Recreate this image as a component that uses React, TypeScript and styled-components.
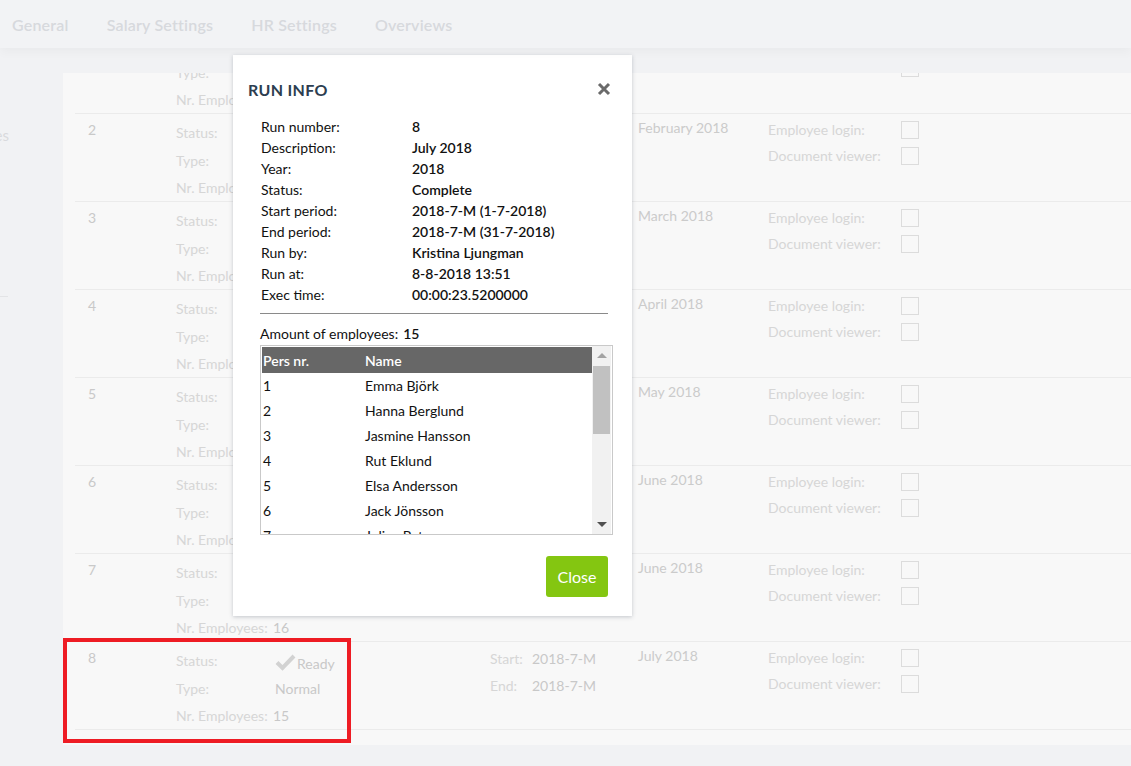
import React from 'react';
import styled, { createGlobalStyle } from 'styled-components';

const GlobalStyle = createGlobalStyle`
  html, body {
    margin: 0;
    padding: 0;
    background: #f1f2f4;
    font-family: "Source Sans Pro", "Lato", "Noto Sans", sans-serif;
    font-size: 14px;
  }
  #root { min-height: 766px; }
`;

// ---------- page shell ----------
const Page = styled.div`
  position: relative;
  width: 1131px;
  height: 766px;
  overflow: hidden;
  background: #f1f2f4;
`;

const TopBar = styled.div`
  height: 48px;
  display: flex;
  align-items: center;
  gap: 38px;
  padding-left: 12px;
  background: #f2f3f5;
  box-shadow: 0 4px 10px rgba(0, 0, 0, 0.035);
  position: relative;
  z-index: 1;
`;

const Tab = styled.span`
  font-size: 16px;
  font-weight: 600;
  letter-spacing: 0.2px;
  color: #d7d9dd;
`;

const Body = styled.div`
  display: flex;
  padding-top: 25px;
`;

const Sidebar = styled.div`
  width: 63px;
  flex-shrink: 0;
  display: flex;
  flex-direction: column;
`;

const SideItem = styled.div<{ $top?: number }>`
  width: 9px;
  height: 54px;
  display: flex;
  justify-content: flex-end;
  align-items: center;
  overflow: hidden;
  white-space: nowrap;
  color: #d9dadd;
  font-size: 15px;
  margin-top: ${({ $top }) => $top ?? 0}px;
`;

const SideRule = styled.div`
  width: 8px;
  height: 1px;
  background: #e3e4e6;
  margin-top: 134px;
`;

const Card = styled.div`
  flex: 1;
  height: 672px;
  background: #f8f8f8;
  overflow: hidden;
  padding: 0 0 0 12px;
`;

const RowList = styled.div`
  margin-top: -47px;
`;

const Row = styled.div`
  height: 88px;
  box-sizing: border-box;
  border-bottom: 1px solid #ebebeb;
  display: grid;
  grid-template-columns: 88px 99px 215px 148px 130px 133px 1fr;
  padding-left: 13px;
  color: #d3d3d3;
`;

const Num = styled.div`
  padding-top: 7px;
  color: #c9c9c9;
  font-size: 14px;
`;

const Stack = styled.div<{ $pt: number; $lh: number }>`
  display: flex;
  flex-direction: column;
  padding-top: ${({ $pt }) => $pt}px;
  line-height: ${({ $lh }) => $lh}px;
  white-space: nowrap;
`;

const Label = styled.span`
  color: #d6d6d6;
  font-size: 14px;
`;

const Value = styled.span`
  color: #c8c8c8;
  font-size: 14px;
  display: flex;
  align-items: flex-end;
`;

const Month = styled.div`
  padding-top: 5px;
  color: #cbcbcb;
  font-size: 14px;
`;

const Pair = styled.div`
  display: flex;
`;

const PeriodLabel = styled.span`
  width: 42px;
  color: #d6d6d6;
`;

const AccessRow = styled.div`
  display: flex;
  align-items: center;
  height: 26px;
  color: #d6d6d6;
`;

const AccessLabel = styled.span`
  width: 133px;
`;

const Check = styled.span`
  width: 16px;
  height: 16px;
  border: 1px solid #dcdcdc;
  background: #f8f8f8;
`;

const Highlight = styled.div`
  position: absolute;
  left: 63px;
  top: 638px;
  width: 280px;
  height: 97px;
  border: 4px solid #ee1c24;
`;

// ---------- modal ----------
const Modal = styled.div`
  position: absolute;
  left: 233px;
  top: 55px;
  width: 399px;
  height: 561px;
  box-sizing: border-box;
  background: #ffffff;
  box-shadow: 0 1px 4px rgba(40, 50, 70, 0.25);
  padding: 22px 24px 0 15px;
  display: flex;
  flex-direction: column;
  color: #111;
`;

const ModalHead = styled.div`
  display: flex;
  justify-content: space-between;
  align-items: center;
  height: 24px;
`;

const ModalTitle = styled.h3`
  margin: 0;
  font-size: 16px;
  font-weight: 700;
  letter-spacing: 0.3px;
  color: #2d3e50;
`;

const CloseX = styled.button`
  border: 0;
  background: none;
  padding: 0;
  width: 14px;
  height: 14px;
  margin-right: -3px;
  display: flex;
`;

const InfoGrid = styled.div`
  display: grid;
  grid-template-columns: 151px 1fr;
  grid-auto-rows: 21px;
  align-items: center;
  margin: 15px 0 0 13px;
  font-size: 14px;
`;

const InfoLabel = styled.span`
  color: #111;
`;

const InfoValue = styled.span`
  color: #111;
  font-weight: 600;
`;

const Divider = styled.div`
  height: 1px;
  background: #8a8a8a;
  margin: 8px 0 0 12px;
`;

const Amount = styled.div`
  margin: 10px 0 0 12px;
  line-height: 20px;
  display: flex;
  gap: 5px;
`;

const TableBox = styled.div`
  margin: 1px -5px 0 12px;
  height: 190px;
  box-sizing: border-box;
  border: 1px solid #c9c9c9;
  display: flex;
  padding: 1px 1px 0 1px;
`;

const TableView = styled.div`
  flex: 1;
  overflow: hidden;
`;

const Table = styled.table`
  width: 100%;
  border-collapse: collapse;
  font-size: 14px;
`;

const Th = styled.th<{ $w?: number }>`
  background: #676767;
  color: #fff;
  font-weight: 600;
  text-align: left;
  height: 26px;
  padding: 0 0 0 1px;
  width: ${({ $w }) => ($w ? `${$w}px` : 'auto')};
`;

const Td = styled.td`
  height: 25px;
  padding: 0 0 0 1px;
  line-height: 25px;
  color: #111;
`;

const ScrollTrack = styled.div`
  width: 19px;
  background: #f1f1f1;
  display: flex;
  flex-direction: column;
  align-items: center;
  margin-top: -1px;
`;

const Arrow = styled.div<{ $down?: boolean }>`
  width: 0;
  height: 0;
  border-left: 5px solid transparent;
  border-right: 5px solid transparent;
  ${({ $down }) =>
    $down ? 'border-top: 5px solid #505050;' : 'border-bottom: 5px solid #a3a3a3;'}
  margin: ${({ $down }) => ($down ? '0 0 7px' : '7px 0 0')};
`;

const Thumb = styled.div`
  width: 17px;
  height: 68px;
  background: #c1c1c1;
  margin-top: 8px;
`;

const ThumbSpacer = styled.div`
  flex: 1;
`;

const Footer = styled.div`
  display: flex;
  justify-content: flex-end;
  margin-top: 21px;
`;

const CloseButton = styled.button`
  width: 62px;
  height: 41px;
  border: 0;
  border-radius: 3px;
  background: #84c611;
  color: #fff;
  font-family: inherit;
  font-size: 16px;
`;

const rows = [
  { n: 1, month: 'January 2018', emp: 16 },
  { n: 2, month: 'February 2018', emp: 16 },
  { n: 3, month: 'March 2018', emp: 16 },
  { n: 4, month: 'April 2018', emp: 16 },
  { n: 5, month: 'May 2018', emp: 16 },
  { n: 6, month: 'June 2018', emp: 16 },
  { n: 7, month: 'June 2018', emp: 16 },
  { n: 8, month: 'July 2018', emp: 15 },
];

const info: [string, string][] = [
  ['Run number:', '8'],
  ['Description:', 'July 2018'],
  ['Year:', '2018'],
  ['Status:', 'Complete'],
  ['Start period:', '2018-7-M (1-7-2018)'],
  ['End period:', '2018-7-M (31-7-2018)'],
  ['Run by:', 'Kristina Ljungman'],
  ['Run at:', '8-8-2018 13:51'],
  ['Exec time:', '00:00:23.5200000'],
];

const employees = [
  'Emma Björk',
  'Hanna Berglund',
  'Jasmine Hansson',
  'Rut Eklund',
  'Elsa Andersson',
  'Jack Jönsson',
  'Julius Petersson',
  'Oscar Lindqvist',
];

const CheckMark = () => (
  <svg width="21" height="17" viewBox="0 0 21 17" style={{ marginRight: 1, marginBottom: 4 }}>
    <path d="M2 8.5 L7.5 14 L19 2" fill="none" stroke="#d2d2d2" strokeWidth="4" />
  </svg>
);

const RunRow = ({ n, month, emp }: { n: number; month: string; emp: number }) => (
  <Row>
    <Num>{n}</Num>
    <Stack $pt={5} $lh={28}>
      <Label>Status:</Label>
      <Label>Type:</Label>
      <Label style={{ lineHeight: '26px' }}>Nr. Employees:</Label>
    </Stack>
    <Stack $pt={5} $lh={28}>
      <Value style={{ height: 28 }}>
        <CheckMark />
        <span style={{ lineHeight: '22px' }}>Ready</span>
      </Value>
      <Value>Normal</Value>
      <Value style={{ lineHeight: '26px', marginLeft: -2 }}>{emp}</Value>
    </Stack>
    <Stack $pt={3} $lh={27}>
      <Pair>
        <PeriodLabel>Start:</PeriodLabel>
        <Value>2018-7-M</Value>
      </Pair>
      <Pair>
        <PeriodLabel>End:</PeriodLabel>
        <Value>2018-7-M</Value>
      </Pair>
    </Stack>
    <Month>{month}</Month>
    <Stack $pt={3} $lh={26} style={{ gridColumn: 'span 2' }}>
      <AccessRow>
        <AccessLabel>Employee login:</AccessLabel>
        <Check />
      </AccessRow>
      <AccessRow>
        <AccessLabel>Document viewer:</AccessLabel>
        <Check />
      </AccessRow>
    </Stack>
  </Row>
);

export default function App() {
  return (
    <Page>
      <GlobalStyle />
      <TopBar>
        <Tab>General</Tab>
        <Tab>Salary Settings</Tab>
        <Tab>HR Settings</Tab>
        <Tab>Overviews</Tab>
      </TopBar>
      <Body>
        <Sidebar>
          <SideItem $top={35}>Salaries</SideItem>
          <SideRule />
        </Sidebar>
        <Card>
          <RowList>
            {rows.map((r) => (
              <RunRow key={r.n} {...r} />
            ))}
          </RowList>
        </Card>
      </Body>

      <Highlight />

      <Modal>
        <ModalHead>
          <ModalTitle>RUN INFO</ModalTitle>
          <CloseX aria-label="Close">
            <svg width="14" height="14" viewBox="0 0 14 14">
              <path d="M2 2 L12 12 M12 2 L2 12" stroke="#6a6a6a" strokeWidth="3" />
            </svg>
          </CloseX>
        </ModalHead>
        <InfoGrid>
          {info.map(([l, v]) => (
            <React.Fragment key={l}>
              <InfoLabel>{l}</InfoLabel>
              <InfoValue>{v}</InfoValue>
            </React.Fragment>
          ))}
        </InfoGrid>
        <Divider />
        <Amount>
          <span>Amount of employees:</span>
          <InfoValue>15</InfoValue>
        </Amount>
        <TableBox>
          <TableView>
            <Table>
              <thead>
                <tr>
                  <Th $w={101}>Pers nr.</Th>
                  <Th>Name</Th>
                </tr>
              </thead>
              <tbody>
                {employees.map((name, i) => (
                  <tr key={name}>
                    <Td>{i + 1}</Td>
                    <Td>{name}</Td>
                  </tr>
                ))}
              </tbody>
            </Table>
          </TableView>
          <ScrollTrack>
            <Arrow />
            <Thumb />
            <ThumbSpacer />
            <Arrow $down />
          </ScrollTrack>
        </TableBox>
        <Footer>
          <CloseButton>Close</CloseButton>
        </Footer>
      </Modal>
    </Page>
  );
}
